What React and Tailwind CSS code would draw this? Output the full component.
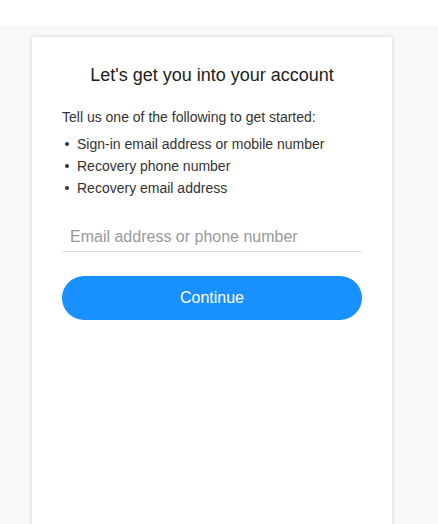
export default function App() {
  return (
    <div className="w-[438px] h-[524px] bg-white overflow-hidden" style={{ fontFamily: '"Liberation Sans", Arial, sans-serif' }}>
      <div className="h-[25px] bg-white" />
      <div className="h-[499px] bg-[#f8f8f8] pt-[12px] pl-[32px]">
        <div className="w-[360px] h-[600px] bg-white shadow-[0_0_4px_rgba(0,0,0,0.15)] px-[30px] pt-[27px]">
          <h1 className="text-center text-[18px] leading-[23px] text-[#222]">Let's get you into your account</h1>
          <p className="mt-[20px] text-[14px] leading-[20px] text-[#333]">Tell us one of the following to get started:</p>
          <ul className="mt-[6px] text-[14px] leading-[22px] text-[#333]">
            {["Sign-in email address or mobile number", "Recovery phone number", "Recovery email address"].map((t) => (
              <li key={t} className="flex items-center">
                <span className="w-[4px] h-[4px] rounded-full bg-[#333] ml-[3px] mr-[8px]" />
                {t}
              </li>
            ))}
          </ul>
          <div className="mt-[23px] border-b border-[#ddd] h-[30px] flex items-center pl-[8px]">
            <input
              className="w-full outline-none text-[16px] text-[#333] placeholder:text-[#999] bg-transparent"
              placeholder="Email address or phone number"
              style={{ fontFamily: '"Liberation Sans", Arial, sans-serif' }}
            />
          </div>
          <button className="mt-[24px] w-full h-[44px] rounded-full bg-[#1890ff] text-white text-[16px]" style={{ fontFamily: '"Liberation Sans", Arial, sans-serif' }}>
            Continue
          </button>
        </div>
      </div>
    </div>
  );
}
